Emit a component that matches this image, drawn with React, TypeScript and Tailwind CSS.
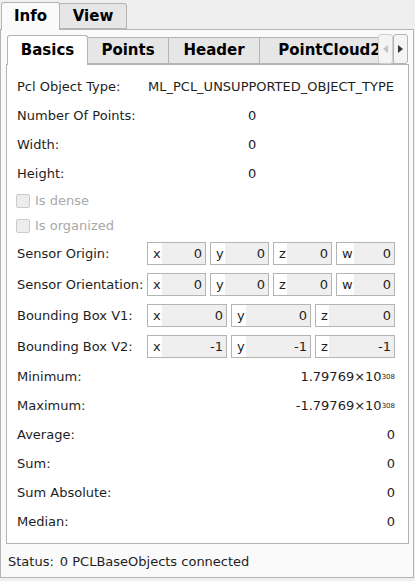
import React from 'react';

type Row =
  | { kind: 'text'; label: string; value: string; h: number; align: 'start' | 'mid' }
  | { kind: 'num'; label: string; value: React.ReactNode; h: number }
  | { kind: 'check'; label: string; h: number }
  | { kind: 'vec'; label: string; fields: [string, string][]; h: number };

const Pow = ({ base }: { base: string }) => (
  <span>
    {base}×10<sup className="text-[7px] relative -top-[2px]">308</sup>
  </span>
);

const rows: Row[] = [
  { kind: 'text', label: 'Pcl Object Type:', value: 'ML_PCL_UNSUPPORTED_OBJECT_TYPE', h: 29, align: 'start' },
  { kind: 'text', label: 'Number Of Points:', value: '0', h: 29, align: 'mid' },
  { kind: 'text', label: 'Width:', value: '0', h: 29, align: 'mid' },
  { kind: 'text', label: 'Height:', value: '0', h: 29, align: 'mid' },
  { kind: 'check', label: 'Is dense', h: 25 },
  { kind: 'check', label: 'Is organized', h: 25 },
  { kind: 'vec', label: 'Sensor Origin:', fields: [['x', '0'], ['y', '0'], ['z', '0'], ['w', '0']], h: 31 },
  { kind: 'vec', label: 'Sensor Orientation:', fields: [['x', '0'], ['y', '0'], ['z', '0'], ['w', '0']], h: 31 },
  { kind: 'vec', label: 'Bounding Box V1:', fields: [['x', '0'], ['y', '0'], ['z', '0']], h: 31 },
  { kind: 'vec', label: 'Bounding Box V2:', fields: [['x', '-1'], ['y', '-1'], ['z', '-1']], h: 31 },
  { kind: 'num', label: 'Minimum:', value: <Pow base="1.79769" />, h: 29 },
  { kind: 'num', label: 'Maximum:', value: <Pow base="-1.79769" />, h: 29 },
  { kind: 'num', label: 'Average:', value: '0', h: 29 },
  { kind: 'num', label: 'Sum:', value: '0', h: 29 },
  { kind: 'num', label: 'Sum Absolute:', value: '0', h: 29 },
  { kind: 'num', label: 'Median:', value: '0', h: 29 },
];

function Field({ name, value }: { name: string; value: string }) {
  return (
    <div className="flex h-[23px] border border-[#b4b4b4] bg-white">
      <span className="pl-[5px] pr-[1px] leading-[21px]">{name}</span>
      <span className="flex-1 bg-[#efefef] text-right pr-[3px] leading-[21px]">{value}</span>
    </div>
  );
}

function InfoRow({ row }: { row: Row }) {
  if (row.kind === 'check') {
    return (
      <div className="flex items-center pl-[9px]" style={{ height: row.h }}>
        <div className="w-[14px] h-[14px] border border-[#cbcbcb] bg-[#ededed] rounded-[2px]" />
        <span className="ml-[5px] text-[#a9a9a9]">{row.label}</span>
      </div>
    );
  }
  return (
    <div className="flex items-center pl-[10px] pr-[13px]" style={{ height: row.h }}>
      <span className="w-[130px] shrink-0">{row.label}</span>
      {row.kind === 'text' && row.align === 'start' && <span className="pl-[1px]">{row.value}</span>}
      {row.kind === 'text' && row.align === 'mid' && <span className="pl-[101px]">{row.value}</span>}
      {row.kind === 'num' && <span className="ml-auto">{row.value}</span>}
      {row.kind === 'vec' && (
        <div className={`grid gap-[4px] w-[250px] ${row.fields.length === 4 ? 'grid-cols-4' : 'grid-cols-3'}`}>
          {row.fields.map(([n, v]) => (
            <Field key={n} name={n} value={v} />
          ))}
        </div>
      )}
    </div>
  );
}

export default function App() {
  const innerTabs = [
    { name: 'Points', w: 81 },
    { name: 'Header', w: 91 },
    { name: 'PointCloud2', w: 140 },
  ];
  return (
    <div className="w-[415px] h-[581px] bg-[#efefef] overflow-hidden text-[13px] text-[#1e1e1e] font-['DejaVu_Sans',sans-serif]">
      {/* outer tabs */}
      <div className="flex items-end h-[29px] pl-[1px]">
        <div className="relative z-10 -mb-px w-[59px] h-[28px] bg-[#fafafa] border border-b-0 border-[#b4b4b4] rounded-t-[3px] flex items-center justify-center font-bold text-[15px] text-black">
          Info
        </div>
        <div className="w-[67px] h-[26px] bg-[#e6e6e6] border border-l-0 border-[#b4b4b4] rounded-tr-[3px] flex items-center justify-center font-bold text-[15px] text-black">
          View
        </div>
      </div>

      {/* outer pane */}
      <div className="h-[549px] w-[414px] border border-[#b4b4b4] bg-[#fafafa] flex flex-col">
        {/* inner tabs */}
        <div className="flex items-end h-[34px] pt-[4px] pl-[6px] pr-[5px]">
          <div className="relative z-10 -mb-px w-[81px] h-[30px] bg-white border border-b-0 border-[#b4b4b4] rounded-t-[3px] flex items-center justify-center font-bold text-[15px] text-black">
            Basics
          </div>
          <div className="flex-1 flex items-end overflow-hidden relative h-[30px]">
            {innerTabs.map((t) => (
              <div
                key={t.name}
                className="shrink-0 h-[27px] bg-[#e6e6e6] border border-l-0 border-[#b4b4b4] flex items-center justify-center font-bold text-[15px] text-black whitespace-nowrap"
                style={{ width: t.w }}
              >
                {t.name}
              </div>
            ))}
            <div className="absolute right-0 top-0 h-[30px] flex">
              <div className="w-[15px] h-[30px] bg-[#f4f4f4] border border-[#cfcfcf] rounded-[3px] flex items-center justify-center">
                <svg width="5" height="8" viewBox="0 0 5 8">
                  <path d="M5 0 L0 4 L5 8 Z" fill="#c4c4c4" />
                </svg>
              </div>
              <div className="w-[15px] h-[30px] bg-[#f4f4f4] border border-[#b4b4b4] rounded-[3px] flex items-center justify-center">
                <svg width="5" height="8" viewBox="0 0 5 8">
                  <path d="M0 0 L5 4 L0 8 Z" fill="#333" />
                </svg>
              </div>
            </div>
          </div>
        </div>

        {/* inner pane */}
        <div className="ml-[5px] mr-[4px] h-[480px] border border-[#b4b4b4] bg-white pt-[7px] flex flex-col">
          {rows.map((r) => (
            <InfoRow key={r.label} row={r} />
          ))}
        </div>

        {/* status */}
        <div className="flex items-center flex-1 pl-[7px] pt-[3px]">
          <span>Status:</span>
          <span className="ml-[6px]">0 PCLBaseObjects connected</span>
        </div>
      </div>
    </div>
  );
}
